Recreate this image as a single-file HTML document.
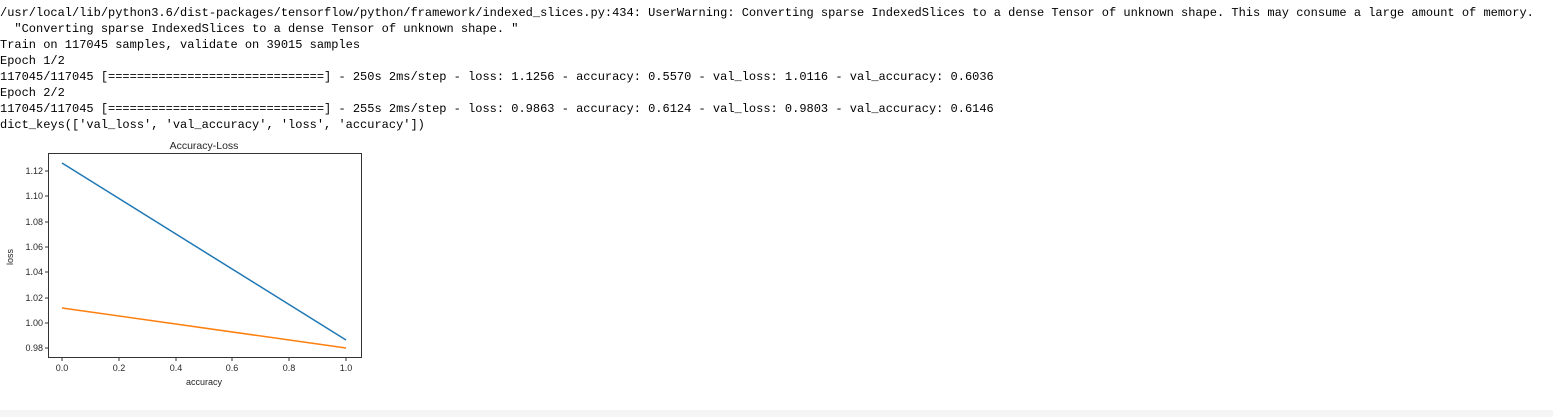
<!DOCTYPE html>
<html><head><style>
html,body{margin:0;padding:0;background:#fff;width:1553px;height:417px;overflow:hidden}
pre{margin:0;position:absolute;left:0;top:5px;font-family:"Liberation Mono",monospace;font-size:12px;line-height:16px;color:#000}
.band{position:absolute;left:0;top:410px;width:1553px;height:7px;background:#f5f5f5}
svg{position:absolute;left:0;top:135px}
</style></head><body>
<pre>/usr/local/lib/python3.6/dist-packages/tensorflow/python/framework/indexed_slices.py:434: UserWarning: Converting sparse IndexedSlices to a dense Tensor of unknown shape. This may consume a large amount of memory.
  "Converting sparse IndexedSlices to a dense Tensor of unknown shape. "
Train on 117045 samples, validate on 39015 samples
Epoch 1/2
117045/117045 [==============================] - 250s 2ms/step - loss: 1.1256 - accuracy: 0.5570 - val_loss: 1.0116 - val_accuracy: 0.6036
Epoch 2/2
117045/117045 [==============================] - 255s 2ms/step - loss: 0.9863 - accuracy: 0.6124 - val_loss: 0.9803 - val_accuracy: 0.6146
dict_keys(['val_loss', 'val_accuracy', 'loss', 'accuracy'])</pre>
<svg width="380" height="275" font-family="Liberation Sans, sans-serif" font-size="9" fill="#262626">
<text x="204" y="14" text-anchor="middle" font-size="10.5">Accuracy-Loss</text>
<rect x="48.5" y="18.5" width="313" height="204" fill="none" stroke="#333" stroke-width="1"/>
<g stroke="#333">
<line x1="45" x2="48" y1="36" y2="36"/><line x1="45" x2="48" y1="61" y2="61"/><line x1="45" x2="48" y1="87" y2="87"/><line x1="45" x2="48" y1="112" y2="112"/><line x1="45" x2="48" y1="137" y2="137"/><line x1="45" x2="48" y1="163" y2="163"/><line x1="45" x2="48" y1="188" y2="188"/><line x1="45" x2="48" y1="213" y2="213"/>
<line x1="62" x2="62" y1="223" y2="226"/><line x1="119" x2="119" y1="223" y2="226"/><line x1="176" x2="176" y1="223" y2="226"/><line x1="232" x2="232" y1="223" y2="226"/><line x1="289" x2="289" y1="223" y2="226"/><line x1="346" x2="346" y1="223" y2="226"/>
</g>
<g text-anchor="end">
<text x="43" y="39">1.12</text><text x="43" y="64">1.10</text><text x="43" y="90">1.08</text><text x="43" y="115">1.06</text><text x="43" y="140">1.04</text><text x="43" y="166">1.02</text><text x="43" y="191">1.00</text><text x="43" y="216">0.98</text>
</g>
<g text-anchor="middle">
<text x="62" y="236">0.0</text><text x="119" y="236">0.2</text><text x="176" y="236">0.4</text><text x="232" y="236">0.6</text><text x="289" y="236">0.8</text><text x="346" y="236">1.0</text>
<text x="204" y="250">accuracy</text>
<text transform="translate(13,122) rotate(-90)">loss</text>
</g>
<line x1="62" y1="28" x2="346" y2="205" stroke="#1f77b4" stroke-width="1.5"/>
<line x1="62" y1="173" x2="346" y2="213" stroke="#ff7f0e" stroke-width="1.5"/>
</svg>
<div class="band"></div>
</body></html>
